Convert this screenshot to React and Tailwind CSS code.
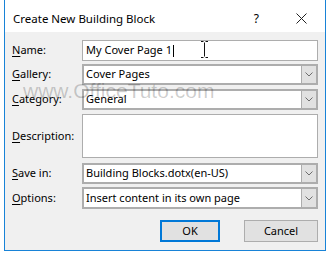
import React from "react";

const font = { fontFamily: '"Noto Sans", "Open Sans", sans-serif' };

const Label = ({ k, rest }) => (
  <div className="w-[70px] shrink-0 text-[11px] text-black">
    <span className="underline underline-offset-2">{k}</span>
    {rest}
  </div>
);

const Chevron = () => (
  <svg width="8" height="5" viewBox="0 0 8 5" fill="none">
    <polyline points="0.5,0.5 4,4 7.5,0.5" stroke="#6d6d6d" strokeWidth="1" />
  </svg>
);

const Combo = ({ value }) => (
  <div className="flex flex-1 h-full border-2 border-[#adadad] bg-white">
    <div className="flex-1 flex items-center pl-[2px] text-[11px] text-black whitespace-nowrap overflow-hidden">
      {value}
    </div>
    <div className="w-[15px] h-full bg-[#e1e1e1] border-l border-[#adadad] flex items-center justify-center">
      <Chevron />
    </div>
  </div>
);

const IBeam = () => (
  <svg width="9" height="17" viewBox="0 0 9 17" fill="none">
    <path d="M1 0.5h2.5M5.5 0.5H8M4.5 1.5v14M1 16.5h2.5M5.5 16.5H8" stroke="#111" strokeWidth="1" />
  </svg>
);

export default function App() {
  return (
    <div className="w-[330px] h-[255px] bg-white" style={font}>
      <div className="relative ml-[4px] w-[322px] h-[251px] border-x border-b border-[#1883d7] bg-[#f0f0f0] flex flex-col">
        {/* Title bar */}
        <div className="h-[32px] bg-white flex items-center pl-[8px] pt-[5px] text-[11.5px] text-black">
          <span>Create New Building Block</span>
          <span className="ml-auto mr-[37px] text-[12px]">?</span>
          <svg className="mr-[18px]" width="11" height="11" viewBox="0 0 11 11" fill="none">
            <path d="M0.5 0.5L10.5 10.5M10.5 0.5L0.5 10.5" stroke="#222" strokeWidth="1" />
          </svg>
        </div>

        {/* Form */}
        <div className="flex flex-col pt-[8px] pl-[7px] pr-[7px]">
          <div className="flex items-center h-[21px]">
            <Label k="N" rest="ame:" />
            <div className="relative flex-1 h-full border border-[#adadad] bg-white flex items-center pl-[3px] text-[11px] text-black">
              <span>My Cover Page 1</span>
              <span className="ml-[1px] w-px h-[12px] bg-black" />
              <div className="absolute left-[117px] top-0">
                <IBeam />
              </div>
            </div>
          </div>
          <div className="flex items-center h-[21px] mt-[3px]">
            <Label k="G" rest="allery:" />
            <Combo value="Cover Pages" />
          </div>
          <div className="flex items-center h-[21px] mt-[4px]">
            <Label k="C" rest="ategory:" />
            <Combo value="General" />
          </div>
          <div className="flex items-center h-[44px] mt-[4px]">
            <Label k="D" rest="escription:" />
            <div className="flex-1 h-full border border-[#adadad] bg-white" />
          </div>
          <div className="flex items-center h-[21px] mt-[5px]">
            <Label k="S" rest="ave in:" />
            <Combo value="Building Blocks.dotx(en-US)" />
          </div>
          <div className="flex items-center h-[22px] mt-[3px]">
            <Label k="O" rest="ptions:" />
            <Combo value="Insert content in its own page" />
          </div>

          {/* Buttons */}
          <div className="flex justify-end gap-[24px] mt-[11px]">
            <button className="w-[60px] h-[22px] border-2 border-[#0078d7] bg-[#e1e1e1] text-[11px] text-black">
              OK
            </button>
            <button className="w-[74px] h-[22px] border border-[#adadad] bg-[#e1e1e1] text-[11px] text-black">
              Cancel
            </button>
          </div>
        </div>

        {/* Watermark */}
        <div
          className="absolute left-[18px] top-[80px] text-[21px] leading-none text-black/20 pointer-events-none whitespace-nowrap"
          style={{ fontFamily: '"Liberation Sans", Arial, sans-serif' }}
        >
          www.OfficeTuto.com
        </div>
      </div>
    </div>
  );
}
